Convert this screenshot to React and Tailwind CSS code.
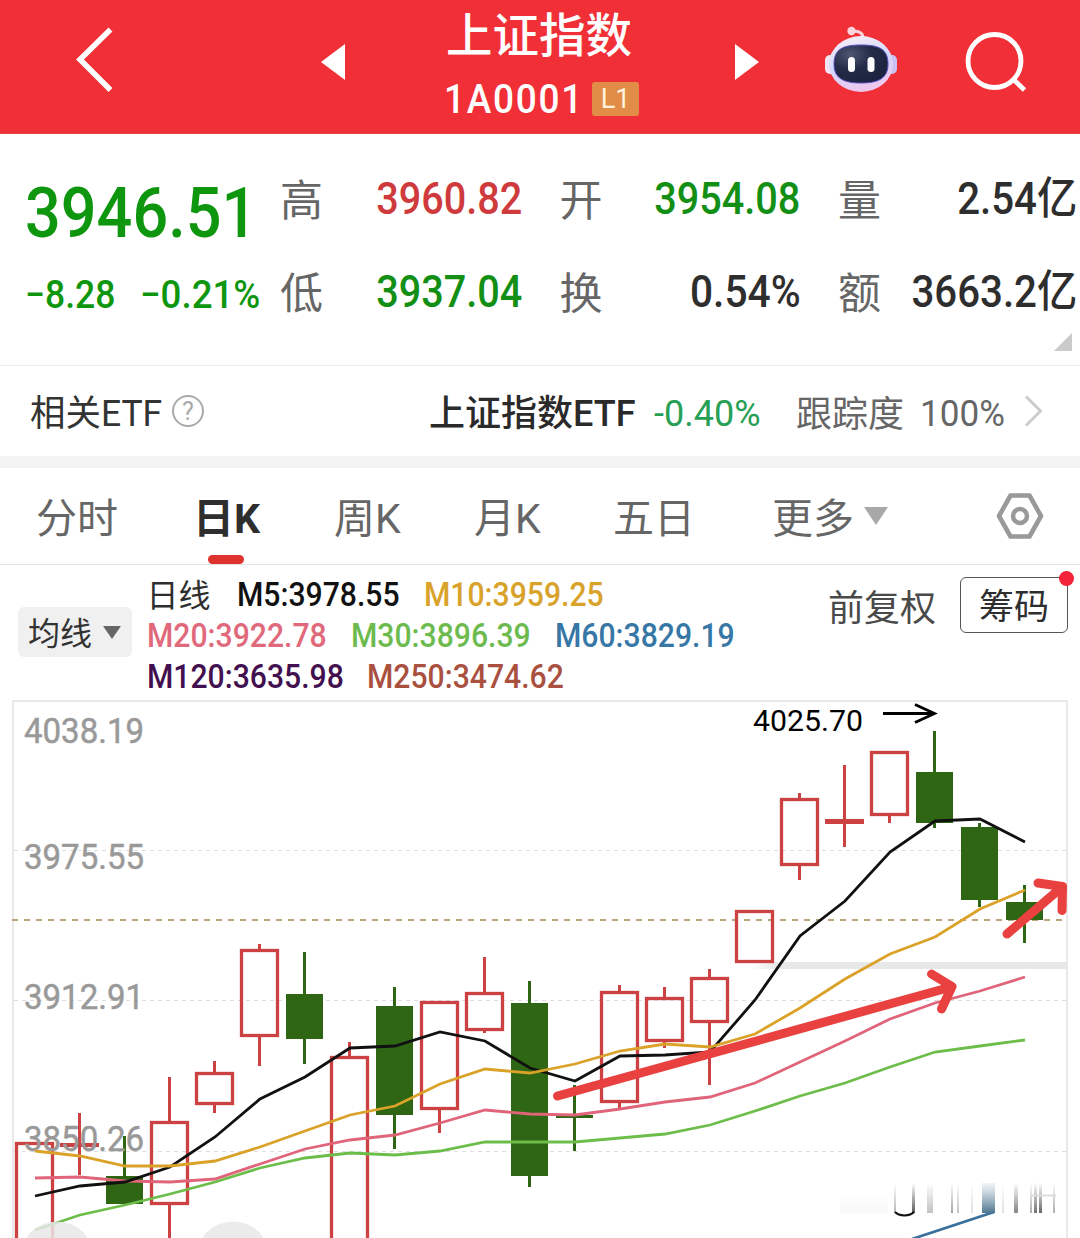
import { useState } from "react";

const FONT = "font-[Roboto,'Noto_Sans_CJK_SC',sans-serif]";

const quotes = [
  { label: "高", value: "3960.82", style: "scale-x-[0.9] text-[#cf3a3c]" },
  { label: "开", value: "3954.08", style: "scale-x-[0.9] text-[#128f14]" },
  { label: "量", value: "2.54亿", style: "scale-x-[0.915] text-[#2e2e2e]" },
  { label: "低", value: "3937.04", style: "scale-x-[0.9] text-[#128f14]" },
  { label: "换", value: "0.54%", style: "scale-x-[0.925] text-[#2e2e2e]" },
  { label: "额", value: "3663.2亿", style: "scale-x-[0.915] text-[#2e2e2e]" },
];

const tabs = [
  { name: "分时", width: "w-[160px]" },
  { name: "日K", width: "w-[138px]" },
  { name: "周K", width: "w-[140px]" },
  { name: "月K", width: "w-[139px]" },
  { name: "五日", width: "w-[159px]" },
];

const averages = [
  [
    { text: "M5:3978.55", style: "w-[187px] text-[#111111]" },
    { text: "M10:3959.25", style: "w-[190px] text-[#d9a22b]" },
  ],
  [
    { text: "M20:3922.78", style: "w-[204px] text-[#e0697b]" },
    { text: "M30:3896.39", style: "w-[204px] text-[#6dbb4f]" },
    { text: "M60:3829.19", style: "w-[190px] text-[#3777a6]" },
  ],
  [
    { text: "M120:3635.98", style: "w-[220px] text-[#43104f]" },
    { text: "M250:3474.62", style: "w-[210px] text-[#a9503f]" },
  ],
];

// type, high, top, bottom, low
const candles = [
  ["up", 1142, 1142, 1260, 1260],
  ["up", 1113, 1143, 1147, 1175],
  ["down", 1136, 1176, 1204, 1204],
  ["up", 1077, 1121, 1205, 1260],
  ["up", 1061, 1072, 1105, 1113],
  ["up", 944, 949, 1037, 1066],
  ["down", 952, 994, 1039, 1064],
  ["up", 1042, 1056, 1260, 1260],
  ["down", 987, 1006, 1115, 1149],
  ["up", 1001, 1001, 1110, 1133],
  ["up", 957, 992, 1031, 1033],
  ["down", 981, 1003, 1176, 1187],
  ["down", 1085, 1115, 1118, 1151],
  ["up", 985, 991, 1103, 1108],
  ["up", 987, 997, 1042, 1048],
  ["up", 969, 977, 1023, 1085],
  ["up", 910, 910, 963, 963],
  ["up", 793, 798, 866, 880],
  ["up", 765, 819, 824, 847],
  ["up", 751, 751, 816, 823],
  ["down", 731, 772, 823, 828],
  ["down", 823, 827, 900, 907],
  ["down", 885, 902, 920, 943],
];

const lines = [
  {
    color: "#6cbd4a",
    data: [1230, 1215, 1205, 1194, 1182, 1168, 1158, 1153, 1155, 1151, 1142, 1142, 1142, 1138, 1134, 1125, 1111, 1096, 1083, 1067, 1052, 1046, 1040],
  },
  {
    color: "#e0657a",
    data: [1178, 1177, 1181, 1182, 1179, 1164, 1149, 1140, 1135, 1123, 1110, 1114, 1115, 1109, 1102, 1097, 1083, 1062, 1041, 1019, 1003, 991, 977],
  },
  {
    color: "#111111",
    data: [1196, 1186, 1182, 1167, 1137, 1099, 1077, 1048, 1046, 1032, 1041, 1068, 1081, 1056, 1055, 1052, 1000, 936, 901, 852, 821, 819, 842],
  },
  {
    color: "#daa228",
    data: [1151, 1156, 1166, 1166, 1161, 1147, 1131, 1115, 1106, 1084, 1069, 1073, 1064, 1051, 1044, 1047, 1034, 1008, 979, 954, 937, 909, 890],
  },
];

const axis = [
  { value: "4038.19", y: 743 },
  { value: "3975.55", y: 869 },
  { value: "3912.91", y: 1009 },
  { value: "3850.26", y: 1151 },
];

// x, width, opacity
const streaks = [
  [894, 2, 0.35],
  [912, 3, 0.8],
  [927, 6, 0.3],
  [951, 2, 0.45],
  [957, 2, 0.3],
  [971, 2, 0.15],
  [1002, 2, 0.15],
  [1014, 4, 0.6],
  [1030, 2, 0.4],
  [1034, 3, 0.7],
  [1039, 3, 0.75],
  [1053, 2, 0.4],
];

const candleX = (i) => 34.5 + i * 45;

function Robot() {
  return (
    <svg width="72" height="68" viewBox="0 0 72 68" fill="none">
      <defs>
        <linearGradient id="shell" x1="0" y1="0" x2="0.3" y2="1">
          <stop offset="0" stopColor="#fff1f4" />
          <stop offset="0.55" stopColor="#d3d8fc" />
          <stop offset="1" stopColor="#ecc8ee" />
        </linearGradient>
        <radialGradient id="visor" cx="0.3" cy="0.25" r="0.8">
          <stop offset="0" stopColor="#4d5672" />
          <stop offset="0.5" stopColor="#232b47" />
          <stop offset="1" stopColor="#1b2340" />
        </radialGradient>
      </defs>
      <path d="M27 5.500c5-.8 11 .5 11 6.500" stroke="#fbd3da" strokeWidth="3" />
      <circle cx="26.500" cy="5" r="4.200" fill="#fbd3da" />
      <rect x="0" y="29" width="11" height="19" rx="5" fill="#f3e3f3" />
      <rect x="61" y="29" width="11" height="19" rx="5" fill="#c9c2f2" />
      <ellipse cx="36" cy="38" rx="32" ry="28" fill="url(#shell)" />
      <path
        d="M36 19c18 0 27 4 27 19 0 14-9 19-27 19S9 52 9 38c0-15 9-19 27-19z"
        fill="url(#visor)"
        stroke="#5a4fc0"
        strokeWidth="1"
      />
      <rect x="23" y="31" width="7" height="15" rx="3.500" fill="#fff" />
      <rect x="42.500" y="31" width="7" height="15" rx="3.500" fill="#fff" />
    </svg>
  );
}

function Header() {
  return (
    <div className="flex h-[134px] bg-[#f12f37] text-white border-b border-[#e2454b]">
      <div className="w-[321px] pt-[26px] pl-[74px]">
        <svg width="40" height="68" viewBox="0 0 40 68" fill="none" stroke="#fff" strokeWidth="5.500">
          <path d="M36.500 3.500L6 33.500l30.500 30.500" />
        </svg>
      </div>
      <div className="w-[24px] pt-[44px]">
        <svg width="24" height="36" viewBox="0 0 24 36" fill="#fff">
          <path d="M0 18L24 0v36z" />
        </svg>
      </div>
      <div className="w-[390px] pt-[13px] flex flex-col">
        <span className="pl-[101px] text-[46.500px] leading-none font-medium whitespace-nowrap">上证指数</span>
        <div className="flex pl-[99px] pt-[19px]">
          <span className="w-[148px] h-[34px] text-[41px] leading-none font-medium tracking-[2px] whitespace-nowrap">
            <span className="inline-block origin-left scale-x-[0.9]">1A0001</span>
          </span>
          <span className="w-[47px] h-[34px] mt-[3px] rounded-[3px] bg-[#e18d47] text-[#fff3dc] text-[27px] leading-[35px] text-center">L1</span>
        </div>
      </div>
      <div className="w-[90px] pt-[44px]">
        <svg width="24" height="36" viewBox="0 0 24 36" fill="#fff">
          <path d="M24 18L0 0v36z" />
        </svg>
      </div>
      <div className="w-[140px] pt-[26px]">
        <Robot />
      </div>
      <div className="pt-[30px]">
        <svg width="64" height="64" viewBox="0 0 64 64" fill="none" stroke="#fff" strokeWidth="4.800">
          <circle cx="29.500" cy="31" r="26.500" />
          <path d="M48.500 49.500l11 10.500" />
        </svg>
      </div>
    </div>
  );
}

function Quote() {
  return (
    <div className="h-[231px] flex relative">
      <div className="w-[280px] pl-[25px] pt-[43px] text-[#0f960f] font-medium whitespace-nowrap">
        <div className="h-[99px] text-[71px] leading-none">
          <span className="inline-block origin-left scale-x-[0.887]">3946.51</span>
        </div>
        <div className="flex text-[39px] leading-none">
          <span className="w-[115px]">
            <span className="inline-block origin-left scale-x-[0.91]">−8.28</span>
          </span>
          <span className="inline-block origin-left scale-x-[0.94]">−0.21%</span>
        </div>
      </div>
      <div className="pt-[43px] grid grid-cols-[242px_241px_239px] auto-rows-[93px] gap-x-[37.500px]">
        {quotes.map((q) => (
          <div key={q.label} className="flex justify-between whitespace-nowrap">
            <span className="text-[43px] leading-none text-[#666] w-[43px] pt-[3px] shrink-0">{q.label}</span>
            <span className={`text-[44px] leading-none font-medium inline-block origin-right ${q.style}`}>
              {q.value}
            </span>
          </div>
        ))}
      </div>
      <svg className="absolute right-2 bottom-[14px]" width="18" height="18" viewBox="0 0 18 18" fill="#cacaca">
        <path d="M18 0v18H0z" />
      </svg>
    </div>
  );
}

function EtfRow() {
  return (
    <div className="h-[91px] flex border-t border-[#ececec] pt-[29px] text-[36px] leading-none whitespace-nowrap">
      <span className="w-[172px] pl-[30px] pt-px text-[#333]">
        <span className="inline-block origin-left scale-x-[0.985]">相关ETF</span>
      </span>
      <span className="size-8 rounded-full border-2 border-[#aaa] text-[#aaa] text-[25px] leading-[29px] text-center">?</span>
      <span className="w-[225px] ml-[225px] pt-px font-medium text-[#2a2a2a]">上证指数ETF</span>
      <span className="w-[142px] pt-px text-[#27a056]">-0.40%</span>
      <span className="w-[124px] pt-[2px] text-[#666]">跟踪度</span>
      <span className="w-[104px] pt-px text-[#666]">
        <span className="inline-block origin-left scale-x-[0.975]">100%</span>
      </span>
      <svg width="20" height="32" viewBox="0 0 20 32" fill="none" stroke="#ccc" strokeWidth="3">
        <path d="M2 1.500l14.500 14.500L2 30.500" />
      </svg>
    </div>
  );
}

function Tabs() {
  const [active, setActive] = useState("日K");

  return (
    <div className="h-[97px] flex border-b border-[#e4e4e4] pl-[36px] pt-[31px] text-[41px] leading-none whitespace-nowrap text-[#666]">
      {tabs.map((tab) => (
        <div
          key={tab.name}
          onClick={() => setActive(tab.name)}
          className={`${tab.width} cursor-pointer ${active === tab.name ? "font-bold text-[#2e2e2e]" : ""}`}
        >
          <div className={active === tab.name ? "-ml-[3px]" : ""}>{tab.name}</div>
          {active === tab.name && <div className="w-9 h-[9px] mt-[15px] ml-3 rounded-full bg-[#e0332f]"></div>}
        </div>
      ))}
      <span className="w-[92px]">更多</span>
      <svg className="mt-[8px]" width="24" height="18" viewBox="0 0 24 18" fill="#a8a8a8">
        <path d="M0 0h24L12 18z" />
      </svg>
      <svg className="ml-[107px] -mt-[7px]" width="50" height="48" viewBox="0 0 50 48" fill="none" stroke="#999">
        <path d="M15.500 3.500h19L46 24 34.500 44.500h-19L4 24z" strokeWidth="4.600" strokeLinejoin="round" />
        <circle cx="25" cy="24" r="7" strokeWidth="4.500" />
      </svg>
    </div>
  );
}

function Legend() {
  return (
    <div className="h-[135px] flex whitespace-nowrap">
      <div className="ml-[18px] mt-[42px] w-[114px] h-[50px] rounded-md bg-[#f0f0f0] flex items-center pl-[10px] gap-[11px]">
        <span className="text-[32px] leading-none text-[#333] pt-[3px]">均线</span>
        <svg width="18" height="13" viewBox="0 0 18 13" fill="#666">
          <path d="M0 0h18L9 13z" />
        </svg>
      </div>
      <div className="w-[696px] pl-[14.500px] pt-[13px] text-[33px] leading-none font-medium">
        {averages.map((row, i) => (
          <div key={i} className="flex h-[41px]">
            {i === 0 && <span className="w-[90px] pt-[2px] text-[32px] font-normal text-[#2e2e2e]">日线</span>}
            {row.map((item) => (
              <span key={item.text} className={item.style}>
                <span className="inline-block origin-left scale-x-[0.913]">{item.text}</span>
              </span>
            ))}
          </div>
        ))}
      </div>
      <span className="w-[132px] pt-[26px] text-[36px] leading-none text-[#4a4a4a]">前复权</span>
      <div className="relative mt-[12px] w-[108px] h-[56px] border border-[#555] rounded-md text-[35px] leading-[60px] text-center text-[#2e2e2e]">
        筹码
        <div className="absolute -top-[7px] -right-[7px] size-[15px] rounded-full bg-[#f4233a]"></div>
      </div>
    </div>
  );
}

function Candle({ type, high, top, bottom, low, x }) {
  if (type === "down") {
    return (
      <g fill="#2f6613">
        <rect x={x - 1.5} y={high} width="3" height={low - high} />
        <rect x={x - 18.5} y={top} width="37" height={bottom - top} />
      </g>
    );
  }
  return (
    <g fill="#cc4142">
      <rect x={x - 1.5} y={high} width="3" height={top - high} />
      <rect x={x - 1.5} y={bottom} width="3" height={low - bottom} />
      {bottom - top < 8 ? (
        <>
          <rect x={x - 1.5} y={high} width="3" height={low - high} />
          <rect x={x - 19.5} y={top} width="39" height={bottom - top} />
        </>
      ) : (
        <rect
          x={x - 18}
          y={top + 1.5}
          width="36"
          height={bottom - top - 3}
          fill="none"
          stroke="#cc4142"
          strokeWidth="3.300"
        />
      )}
    </g>
  );
}

function Chart() {
  return (
    <svg className="block" width="1080" height="538" viewBox="0 700 1080 538" fill="none">
      <defs>
        <linearGradient id="streak" x1="0" y1="0" x2="0" y2="1">
          <stop offset="0" stopColor="#333" stopOpacity="0" />
          <stop offset="1" stopColor="#333" />
        </linearGradient>
        <linearGradient id="streakBlue" x1="0" y1="0" x2="0" y2="1">
          <stop offset="0" stopColor="#7f9bb0" stopOpacity="0.1" />
          <stop offset="1" stopColor="#4f7690" />
        </linearGradient>
        <linearGradient id="support" x1="0" y1="0" x2="1" y2="0">
          <stop offset="0" stopColor="#e8e8e8" stopOpacity="0" />
          <stop offset="0.08" stopColor="#e8e8e8" />
        </linearGradient>
      </defs>

      <path d="M13 1240V701h1054v539" stroke="#e9e9e9" strokeWidth="2" />
      <path d="M14 850.500h1052M14 1000.500h1052M14 1151.500h1052" stroke="#dedede" strokeDasharray="4 4" />
      <path d="M12 920h1056" stroke="#b9a67c" strokeWidth="1.800" strokeDasharray="6 6" />
      <rect x="750" y="962" width="318" height="7" fill="url(#support)" />

      {candles.map(([type, high, top, bottom, low], i) => (
        <Candle key={i} type={type} high={high} top={top} bottom={bottom} low={low} x={candleX(i)} />
      ))}

      {axis.map((a) => (
        <text
          key={a.value}
          x="24"
          y={a.y}
          textLength="120"
          lengthAdjust="spacingAndGlyphs"
          fill="#999"
          stroke="#999"
          strokeWidth="0.500"
          className="text-[35px]"
        >
          {a.value}
        </text>
      ))}

      {lines.map((line) => (
        <polyline
          key={line.color}
          points={line.data.map((y, i) => `${candleX(i) + 0.5},${y}`).join(" ")}
          stroke={line.color}
          strokeWidth="2.800"
        />
      ))}
      <path d="M912 1239L994 1212" stroke="#39719c" strokeWidth="2.800" />

      {streaks.map(([x, width, opacity]) => (
        <rect key={x} x={x} y="1183" width={width} height="30" fill="url(#streak)" opacity={opacity} />
      ))}
      <rect x="982" y="1183" width="13" height="30" fill="url(#streakBlue)" />
      <rect x="840" y="1190" width="48" height="23" fill="url(#streak)" opacity="0.03" />
      <path d="M895 1212c4 4.500 15 4.500 19 0" stroke="#111" strokeWidth="2" />
      <path d="M1030 1195.500h26" stroke="#ddd" strokeWidth="2" />

      <text x="753" y="731" textLength="110" lengthAdjust="spacingAndGlyphs" fill="#000" className="text-[30px]">
        4025.70
      </text>
      <path d="M883 713.500h51M915 704.500l19.500 9-19.500 9" stroke="#000" strokeWidth="2.800" />

      <g stroke="#e8413f" strokeWidth="9" strokeLinecap="round" strokeLinejoin="round">
        <path d="M557.500 1096L951 987" />
        <path d="M931.500 974l20.500 12.500-10.500 22.500" />
        <path d="M1007 934l55-47" />
        <path d="M1038 883l24.500 3.500-.5 24" />
      </g>

      <circle cx="57" cy="1258.500" r="37" fill="#e8e8e8" opacity="0.85" />
      <circle cx="233" cy="1258.500" r="37" fill="#e8e8e8" opacity="0.85" />
    </svg>
  );
}

function App() {
  return (
    <div className={`w-[1080px] h-[1238px] bg-white overflow-hidden ${FONT}`}>
      <Header />
      <Quote />
      <EtfRow />
      <div className="h-3 bg-[#f3f3f3]"></div>
      <Tabs />
      <Legend />
      <Chart />
    </div>
  );
}

export default App;
